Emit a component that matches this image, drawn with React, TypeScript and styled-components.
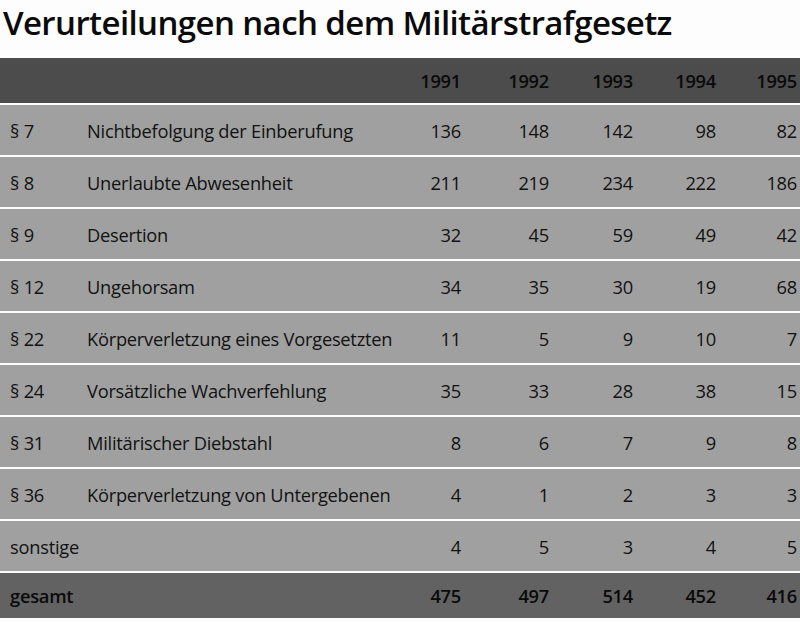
import React from "react";
import styled, { createGlobalStyle } from "styled-components";

const Global = createGlobalStyle`
  html, body { margin: 0; padding: 0; background: #ffffff; }
  body { font-family: "Open Sans", "Noto Sans", sans-serif; }
`;

const Page = styled.div`
  width: 800px;
  height: 622px;
  background: #fdfdfd;
  overflow: hidden;
  display: flex;
  flex-direction: column;
`;

const Title = styled.h1`
  margin: 0;
  padding: 0 0 12px 3px;
  font-family: "Open Sans", sans-serif;
  font-weight: 600;
  font-size: 33px;
  line-height: 46px;
  letter-spacing: -0.6px;
  color: #0a0a0a;
  white-space: nowrap;
`;

const Table = styled.div`
  display: flex;
  flex-direction: column;
  gap: 2px;
`;

const Row = styled.div<{ $kind: "head" | "body" | "total" }>`
  display: grid;
  grid-template-columns: 77px 293px 81px 88px 84px 83px 81px;
  padding: 0 3px 0 10px;
  align-items: center;
  height: ${(p) => (p.$kind === "body" ? 50 : 45)}px;
  background: ${(p) =>
    p.$kind === "head" ? "#4c4c4c" : p.$kind === "total" ? "#626262" : "#a0a0a0"};
  font-family: "Open Sans", sans-serif;
  font-size: 18.3px;
  font-weight: ${(p) => (p.$kind === "body" ? 400 : 600)};
  color: ${(p) => (p.$kind === "body" ? "#121212" : "#0a0a0a")};
  letter-spacing: -0.25px;
`;

const Para = styled.span`
  white-space: nowrap;
`;

const Label = styled.span`
  white-space: nowrap;
`;

const Num = styled.span`
  text-align: right;
  white-space: nowrap;
`;

const years = ["1991", "1992", "1993", "1994", "1995"];

const rows: { p: string; label: string; v: number[] }[] = [
  { p: "§ 7", label: "Nichtbefolgung der Einberufung", v: [136, 148, 142, 98, 82] },
  { p: "§ 8", label: "Unerlaubte Abwesenheit", v: [211, 219, 234, 222, 186] },
  { p: "§ 9", label: "Desertion", v: [32, 45, 59, 49, 42] },
  { p: "§ 12", label: "Ungehorsam", v: [34, 35, 30, 19, 68] },
  { p: "§ 22", label: "Körperverletzung eines Vorgesetzten", v: [11, 5, 9, 10, 7] },
  { p: "§ 24", label: "Vorsätzliche Wachverfehlung", v: [35, 33, 28, 38, 15] },
  { p: "§ 31", label: "Militärischer Diebstahl", v: [8, 6, 7, 9, 8] },
  { p: "§ 36", label: "Körperverletzung von Untergebenen", v: [4, 1, 2, 3, 3] },
];

export default function App() {
  return (
    <Page>
      <Global />
      <Title>Verurteilungen nach dem Militärstrafgesetz</Title>
      <Table>
        <Row $kind="head">
          <Para />
          <Label />
          {years.map((y) => (
            <Num key={y}>{y}</Num>
          ))}
        </Row>
        {rows.map((r) => (
          <Row $kind="body" key={r.p}>
            <Para>{r.p}</Para>
            <Label>{r.label}</Label>
            {r.v.map((n, i) => (
              <Num key={i}>{n}</Num>
            ))}
          </Row>
        ))}
        <Row $kind="body">
          <Para>sonstige</Para>
          <Label />
          {[4, 5, 3, 4, 5].map((n, i) => (
            <Num key={i}>{n}</Num>
          ))}
        </Row>
        <Row $kind="total">
          <Para>gesamt</Para>
          <Label />
          {[475, 497, 514, 452, 416].map((n, i) => (
            <Num key={i}>{n}</Num>
          ))}
        </Row>
      </Table>
    </Page>
  );
}
